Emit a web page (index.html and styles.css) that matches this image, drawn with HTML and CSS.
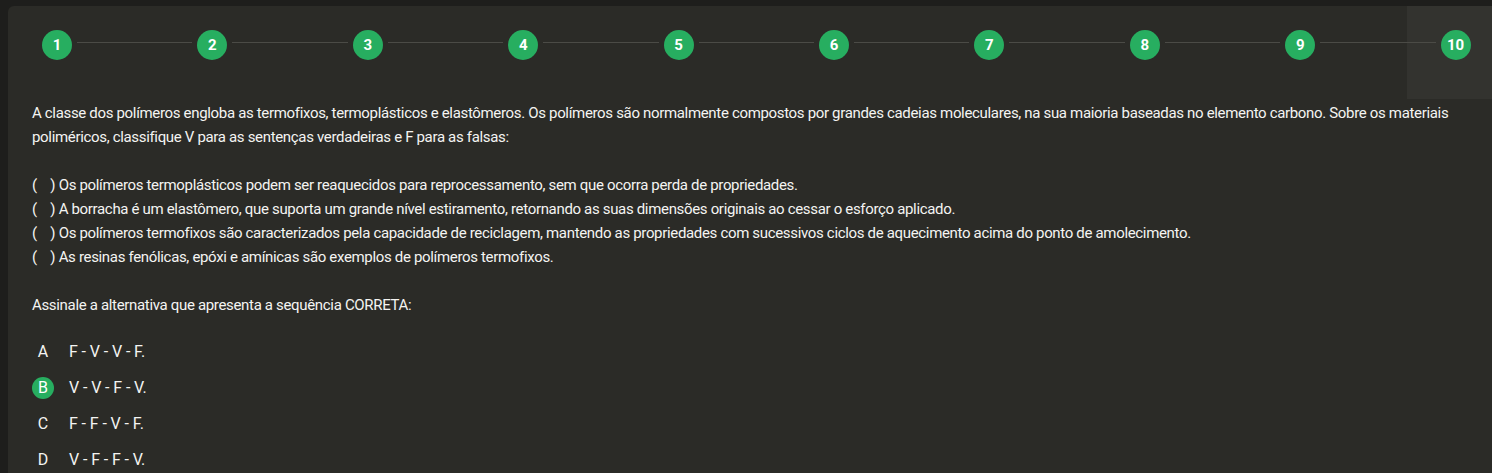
FILE: index.html
```html
<!DOCTYPE html>
<html lang="pt-BR">
<head>
<meta charset="utf-8">
<title>Questão</title>
<link rel="stylesheet" href="styles.css">
</head>
<body>
<div class="card">
  <div class="steps">
    <div class="step first"><span class="ln-l"></span><span class="dot">1</span><span class="ln-r"></span></div>
    <div class="step"><span class="ln-l"></span><span class="dot">2</span><span class="ln-r"></span></div>
    <div class="step"><span class="ln-l"></span><span class="dot">3</span><span class="ln-r"></span></div>
    <div class="step"><span class="ln-l"></span><span class="dot">4</span><span class="ln-r"></span></div>
    <div class="step"><span class="ln-l"></span><span class="dot">5</span><span class="ln-r"></span></div>
    <div class="step"><span class="ln-l"></span><span class="dot">6</span><span class="ln-r"></span></div>
    <div class="step"><span class="ln-l"></span><span class="dot">7</span><span class="ln-r"></span></div>
    <div class="step"><span class="ln-l"></span><span class="dot">8</span><span class="ln-r"></span></div>
    <div class="step"><span class="ln-l"></span><span class="dot">9</span><span class="ln-r"></span></div>
    <div class="step last active"><span class="ln-l"></span><span class="dot">10</span><span class="ln-r"></span></div>
  </div>
  <div class="question">
    <p class="stem">A classe dos polímeros engloba as termofixos, termoplásticos e elastômeros. Os polímeros são normalmente compostos por grandes cadeias moleculares, na sua maioria baseadas no elemento carbono. Sobre os materiais poliméricos, classifique V para as sentenças verdadeiras e F para as falsas:</p>
    <p class="items">
      <span class="item">(&nbsp;&nbsp;&nbsp;&nbsp;) Os polímeros termoplásticos podem ser reaquecidos para reprocessamento, sem que ocorra perda de propriedades.</span>
      <span class="item">(&nbsp;&nbsp;&nbsp;&nbsp;) A borracha é um elastômero, que suporta um grande nível estiramento, retornando as suas dimensões originais ao cessar o esforço aplicado.</span>
      <span class="item">(&nbsp;&nbsp;&nbsp;&nbsp;) Os polímeros termofixos são caracterizados pela capacidade de reciclagem, mantendo as propriedades com sucessivos ciclos de aquecimento acima do ponto de amolecimento.</span>
      <span class="item">(&nbsp;&nbsp;&nbsp;&nbsp;) As resinas fenólicas, epóxi e amínicas são exemplos de polímeros termofixos.</span>
    </p>
    <p class="prompt">Assinale a alternativa que apresenta a sequência CORRETA:</p>
    <ul class="options">
      <li class="opt"><span class="letter">A</span><span class="opt-text">F - V - V - F.</span></li>
      <li class="opt selected"><span class="letter">B</span><span class="opt-text">V - V - F - V.</span></li>
      <li class="opt"><span class="letter">C</span><span class="opt-text">F - F - V - F.</span></li>
      <li class="opt"><span class="letter">D</span><span class="opt-text">V - F - F - V.</span></li>
    </ul>
  </div>
</div>
</body>
</html>
```
FILE: styles.css
```css
html, body {
  margin: 0;
  padding: 0;
  background: #1e1e1c;
  overflow: hidden;
}
body {
  padding: 6px 0 0 8px;
  font-family: Roboto, "Liberation Sans", sans-serif;
  color: #f4f4f2;
}
.card {
  width: 1554px;
  min-height: 480px;
  background: #2b2b27;
  border-radius: 6px 0 0 0;
}
.steps {
  display: grid;
  grid-template-columns: repeat(10, 1fr);
  height: 93px;
}
.step {
  display: flex;
  align-items: flex-start;
  padding-top: 24px;
  box-sizing: border-box;
}
.step.active {
  background: #33332f;
}
.ln-l, .ln-r {
  height: 1px;
  margin-top: 12px;
  background: #4b4b46;
}
.ln-l {
  width: 29px;
  margin-right: 5px;
}
.ln-r {
  flex: 1;
  margin-left: 5px;
}
.first .ln-l, .last .ln-r {
  visibility: hidden;
}
.dot {
  width: 30px;
  height: 30px;
  border-radius: 50%;
  background: #27ae60;
  color: #fff;
  font-weight: 700;
  font-size: 15px;
  display: flex;
  align-items: center;
  justify-content: center;
  flex-shrink: 0;
}
.question {
  padding: 2px 0 0 24px;
  width: 1432px;
  font-size: 15px;
  line-height: 24px;
  letter-spacing: -0.33px;
}
.question p {
  margin: 0 0 24px 0;
}
.items .item {
  display: block;
}
.question .prompt {
  margin-bottom: 17px;
}
.options {
  list-style: none;
  margin: 0;
  padding: 0;
}
.opt {
  display: flex;
  align-items: center;
  height: 36px;
}
.letter {
  width: 22px;
  height: 22px;
  border-radius: 50%;
  display: flex;
  align-items: center;
  justify-content: center;
  margin-right: 15px;
  font-size: 16px;
  letter-spacing: 0;
}
.opt-text {
  font-size: 16px;
  letter-spacing: -0.1px;
}
.selected .letter {
  background: #27ae60;
  color: #fff;
}
```
